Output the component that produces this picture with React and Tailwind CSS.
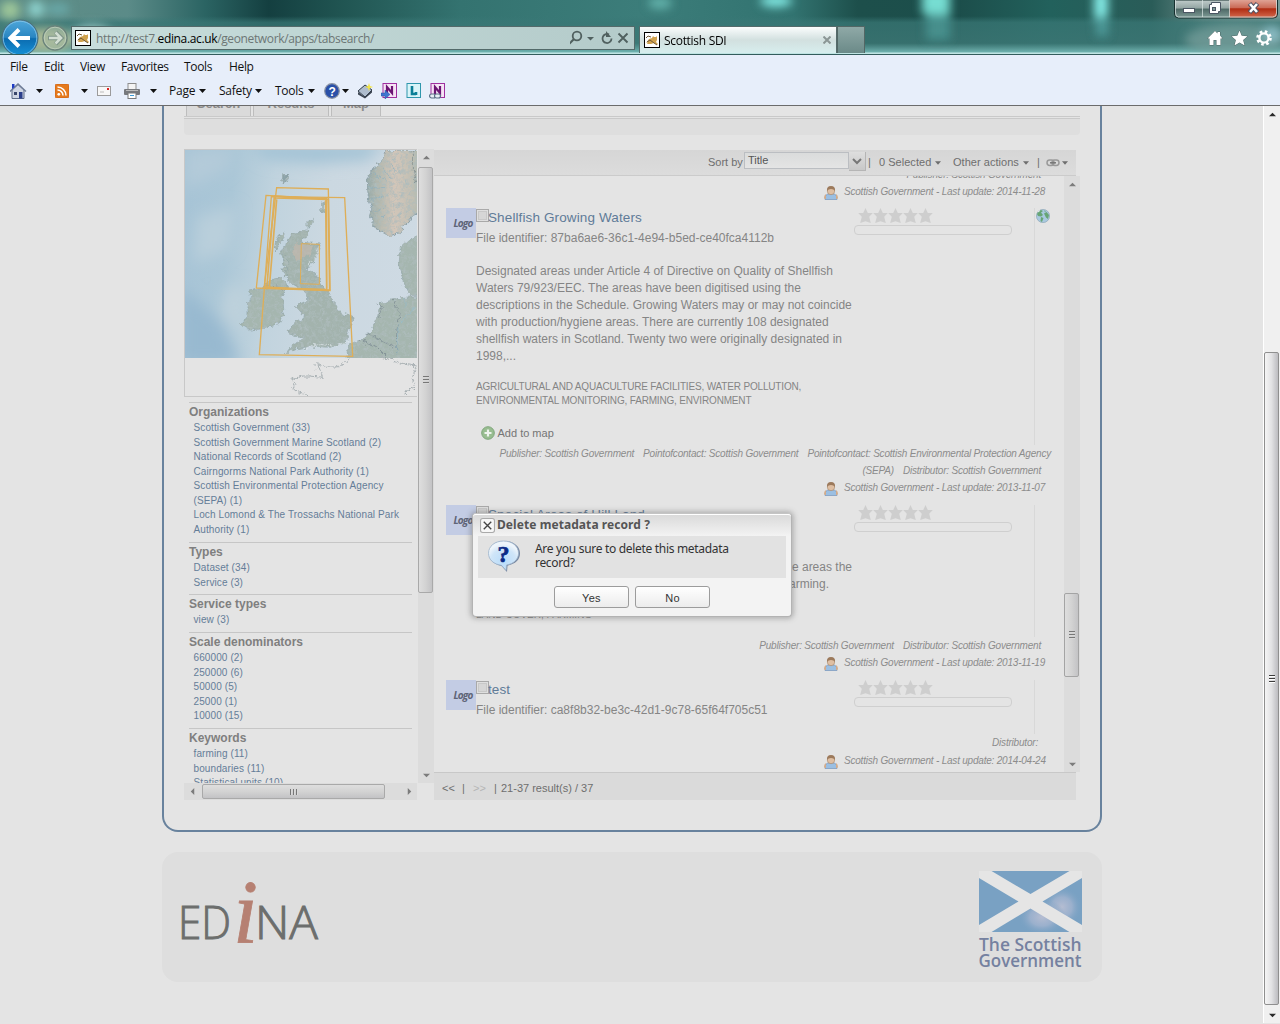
import React from "react";

const MENU_FONT = "font-['Open_Sans','Noto_Sans',sans-serif]";

function Down({ className = "" }) {
  return (
    <svg width="7" height="4" viewBox="0 0 7 4" className={`shrink-0 ${className}`}>
      <path d="M0 0h7L3.5 4z" fill="currentColor" />
    </svg>
  );
}

function Favicon() {
  return (
    <svg width="16" height="16" viewBox="0 0 16 16" className="shrink-0">
      <rect x=".5" y=".5" width="15" height="15" fill="#fff" stroke="#000" />
      <path d="M9 4l1 1h2l1-1v4l-1 2 2 2-1 1-3-2-3 1H3l1-2-2 1 3-4 3-1z" fill="#d0a24e" />
      <path d="M3 10l3-2 4 3 3 2M2 6l2-2 3 1" fill="none" stroke="#6d5836" strokeWidth="1" />
    </svg>
  );
}

function TitleBar() {
  return (
    <div className="relative flex h-[54px] shrink-0 items-start overflow-hidden bg-[#2d6765]">
      <svg width="1280" height="54" className="absolute inset-0" preserveAspectRatio="none">
        <defs>
          <linearGradient id="sky" x1="0" x2="1" y1="0" y2="0">
            <stop offset="0" stopColor="#5f8e86" />
            <stop offset=".1" stopColor="#5b8b88" />
            <stop offset=".16" stopColor="#2b6463" />
            <stop offset=".21" stopColor="#143f40" />
            <stop offset=".27" stopColor="#215653" />
            <stop offset=".36" stopColor="#347370" />
            <stop offset=".5" stopColor="#3c7d7a" />
            <stop offset=".62" stopColor="#327370" />
            <stop offset=".67" stopColor="#1d4f4b" />
            <stop offset=".75" stopColor="#1c4e4b" />
            <stop offset=".82" stopColor="#22615c" />
            <stop offset=".9" stopColor="#2a5c58" />
            <stop offset=".94" stopColor="#648783" />
            <stop offset="1" stopColor="#789b98" />
          </linearGradient>
          <linearGradient id="haze" x1="0" x2="0" y1="0" y2="1">
            <stop offset=".3" stopColor="#3a7977" stopOpacity="0" />
            <stop offset=".42" stopColor="#397775" stopOpacity=".75" />
            <stop offset=".8" stopColor="#3d7876" stopOpacity=".8" />
            <stop offset="1" stopColor="#7ec3c0" />
          </linearGradient>
          <filter id="soft" x="-50%" y="-100%" width="200%" height="300%"><feGaussianBlur stdDeviation="5" /></filter>
        </defs>
        <rect width="1280" height="54" fill="url(#sky)" />
        <rect width="1280" height="54" fill="url(#haze)" />
        <g filter="url(#soft)">
          <ellipse cx="10" cy="10" rx="10" ry="9" fill="#9fc79a" />
          <ellipse cx="36" cy="9" rx="8" ry="8" fill="#8ed3cf" />
          <ellipse cx="58" cy="9" rx="12" ry="6" fill="#69a8a8" />
          <ellipse cx="45" cy="40" rx="30" ry="12" fill="#a7b894" />
          <ellipse cx="92" cy="36" rx="20" ry="12" fill="#8ebcb9" />
          <ellipse cx="660" cy="3" rx="12" ry="6" fill="#63b3ac" />
          <ellipse cx="776" cy="1" rx="16" ry="6" fill="#82eae4" />
          <rect x="922" y="-10" width="28" height="24" fill="#76ddd2" />
          <rect x="926" y="14" width="24" height="26" fill="#478f8c" />
          <rect x="1094" y="-8" width="14" height="28" fill="#84ebe6" />
          <rect x="1096" y="16" width="12" height="20" fill="#4d9a99" />
          <ellipse cx="1235" cy="40" rx="50" ry="16" fill="#79a09d" opacity=".7" />
          <ellipse cx="1272" cy="34" rx="10" ry="8" fill="#8bbcc4" />
        </g>
        <rect y="52.500" width="1280" height="1.500" fill="#bfe4e3" />
      </svg>

      <svg width="71" height="54" className="relative shrink-0">
        <defs>
          <linearGradient id="back" x1="0" x2="0" y1="0" y2="1">
            <stop offset="0" stopColor="#4fa7da" /><stop offset=".48" stopColor="#2a86c2" />
            <stop offset=".52" stopColor="#0b6cb0" /><stop offset="1" stopColor="#1692d8" />
          </linearGradient>
        </defs>
        <circle cx="20" cy="38" r="18" fill="url(#back)" stroke="#4f6b75" />
        <circle cx="20" cy="38" r="16.800" fill="none" stroke="#8cc8e8" strokeWidth=".8" />
        <path d="M10 38h20M19 29.500L10.500 38l8.500 8.500" fill="none" stroke="#fff" strokeWidth="4" />
        <circle cx="55" cy="38" r="12" fill="#a7bba4" fillOpacity=".55" stroke="#6a837b" strokeWidth="1.400" />
        <circle cx="55" cy="38" r="10.800" fill="none" stroke="#c3d1bd" strokeWidth=".8" />
        <path d="M48 38h12M55.500 32l6 6-6 6" fill="none" stroke="#7f9689" strokeWidth="4.400" />
        <path d="M49 38h11M55.500 32.500l5.500 5.500-5.500 5.500" fill="none" stroke="#d2ded2" strokeWidth="2.600" />
      </svg>

      <div className={`relative mt-[26px] flex h-6 w-[564px] shrink-0 items-center border border-[#536a6a] bg-gradient-to-r from-[#c8dedc] to-[#b4cbca] pl-[3px] text-[12px] text-[#6d7675] ${MENU_FONT}`}>
        <Favicon />
        <div className="ml-[5px] mt-px w-[474px] whitespace-pre tracking-[-0.36px]">http://test7.<span className="text-black">edina.ac.uk</span>/geonetwork/apps/tabsearch/</div>
        <svg width="64" height="16" viewBox="2 0 64 16" className="shrink-0" fill="none" stroke="#50605f">
          <circle cx="9" cy="6" r="4.300" strokeWidth="1.800" /><path d="M6 9l-5 5" strokeWidth="2.200" />
          <path d="M19 7h7l-3.500 3.500z" fill="#50605f" stroke="none" />
          <path d="M41 4.500a4.500 4.500 0 1 0 2.500 4" strokeWidth="1.800" /><path d="M38 1v6h5z" fill="#50605f" stroke="none" />
          <path d="M50.500 3.500l9 9M59.500 3.500l-9 9" strokeWidth="1.900" />
        </svg>
      </div>

      <div className={`relative ml-[4px] mt-[26px] flex h-[27px] w-[198px] shrink-0 items-center border border-b-0 border-[#556b6b] bg-gradient-to-b from-[#fbfdfd] via-[#d2e0df] to-[#d7eeee] pl-1 text-[12px] text-black ${MENU_FONT}`}>
        <Favicon />
        <span className="ml-1 mt-px w-[159px] tracking-[-0.3px]">Scottish SDI</span>
        <svg width="8" height="8" viewBox="0 0 8 8"><path d="M.5.5l7 7M7.500.5l-7 7" stroke="#8b9695" strokeWidth="2" /></svg>
      </div>
      <div className="relative mt-[26px] h-[27px] w-[28px] shrink-0 border border-b-0 border-[#526765] bg-gradient-to-b from-[#8fa9a7] to-[#6b8a88]" />

      <svg width="106" height="54" className="relative ml-auto mr-0 shrink-0" viewBox="1174 0 106 54">
        <defs>
          <linearGradient id="ctl" x1="0" x2="0" y1="0" y2="1"><stop offset="0" stopColor="#c1cccb" /><stop offset=".45" stopColor="#93a5a3" /><stop offset=".5" stopColor="#4e6966" /><stop offset="1" stopColor="#809c98" /></linearGradient>
          <linearGradient id="cls" x1="0" x2="0" y1="0" y2="1"><stop offset="0" stopColor="#dfa294" /><stop offset=".45" stopColor="#ca6955" /><stop offset=".5" stopColor="#b02c12" /><stop offset="1" stopColor="#d3684c" /></linearGradient>
        </defs>
        <path d="M1174.500 0v14q0 4 4 4h95q4 0 4-4V0z" fill="url(#ctl)" stroke="#17302f" />
        <path d="M1229.500 0v17.500h44q3.500 0 3.500-4V0z" fill="url(#cls)" />
        <path d="M1175.500 0v13q0 4 3 4h94q4 0 4-4V0M1202.500 0v17M1229.500 0v17" fill="none" stroke="#d7e3e1" strokeOpacity=".75" />
        <rect x="1183.500" y="8.500" width="11" height="4" fill="#fff" stroke="#4b5663" />
        <path d="M1211.500 2.500h9v9h-2v2h-9v-9h2z" fill="#fff" stroke="#4b5663" /><rect x="1212.500" y="7.500" width="3" height="3" fill="#809c98" stroke="#4b5663" />
        <path d="M1249.500 3.500l8 9M1257.500 3.500l-8 9" stroke="#4f5263" strokeWidth="4.600" /><path d="M1250 4l7 8M1257 4l-7 8" stroke="#fff" strokeWidth="2.600" />
        <g fill="#fff" stroke="#4c6664" strokeWidth="1" paintOrder="stroke">
          <path d="M1215 31l2.500 2.500V32h2.500v3.500l2.500 3h-2V45h-4v-5h-3v5h-4v-6.500h-2z" />
          <path d="M1239.500 30.500l2.200 5.300 5.800.5-4.400 3.700 1.500 5.500-5.100-3-5 3 1.400-5.500-4.400-3.700 5.800-.5z" />
        </g>
        <circle cx="1264" cy="38" r="6.300" fill="none" stroke="#fff" strokeWidth="3" strokeDasharray="2.500 2.450" />
        <circle cx="1264" cy="38" r="4.600" fill="none" stroke="#fff" strokeWidth="2.400" />
      </svg>
    </div>
  );
}

function NoteIcon({ kind }) {
  const l = kind === "l";
  return (
    <svg width="17" height="16" viewBox="0 0 17 16" className="shrink-0">
      <rect x="2" y=".5" width="13.500" height="14" fill={l ? "#d9f4f8" : "#f6e3f5"} stroke={l ? "#2f96ac" : "#a02fa0"} />
      {l ? <path d="M7 3v8h4M11 9v3" fill="none" stroke="#0c7f97" strokeWidth="2.600" /> : <path d="M6 11V4l5 6V3" fill="none" stroke="#6b1473" strokeWidth="2.200" />}
      {kind === "arrow" && <path d="M0 10h4V7l5 4.500L4 16v-3H0z" fill="#3f76cf" stroke="#27509d" strokeWidth=".5" />}
      {kind === "link" && <g fill="#e8eef5" stroke="#5a6e86" strokeWidth="1.200"><rect x=".6" y="11" width="6" height="4" rx="2" /><rect x="5.500" y="11" width="6" height="4" rx="2" /></g>}
    </svg>
  );
}

function MenuBars() {
  return (
    <div className={`flex h-[52px] shrink-0 flex-col border-b border-t border-b-[#6b6b6b] border-t-[#335c5c] bg-[#e7eefa] text-[12px] leading-[22px] text-[#111] ${MENU_FONT}`}>
      <div className="flex h-[24px] whitespace-nowrap pl-[10px] pt-px tracking-[-0.34px]">
        <span className="w-[34px]">File</span>
        <span className="w-[36px]">Edit</span>
        <span className="w-[41px]">View</span>
        <span className="w-[63px]">Favorites</span>
        <span className="w-[45px]">Tools</span>
        <span>Help</span>
      </div>
      <div className="flex h-[24px] items-center whitespace-nowrap pl-[10px] tracking-[-0.25px]">
        <svg width="17" height="16" viewBox="0 0 17 16" className="shrink-0">
          <path d="M2 7v8.500h12V7L8 1.500z" fill="#cfd6e4" stroke="#5d6b86" /><path d="M0 8.500L8 1l8 7.500" fill="none" stroke="#6f7d97" strokeWidth="1.500" />
          <path d="M2 1h2.500v3L2 6z" fill="#1f3cc4" /><rect x="9" y="9" width="3.500" height="6.500" fill="#2b3f8b" /><rect x="4" y="9" width="3" height="3" fill="#39466b" />
        </svg>
        <Down className="ml-[9px]" />
        <svg width="14" height="14" viewBox="0 0 14 14" className="ml-[12px] shrink-0">
          <rect width="14" height="14" rx="2" fill="#e57a1d" stroke="#c2560c" strokeWidth=".6" /><circle cx="3.800" cy="10.300" r="1.400" fill="#fff" />
          <path d="M2.500 6a5.500 5.500 0 0 1 5.500 5.500M2.500 3a8.500 8.500 0 0 1 8.500 8.500" fill="none" stroke="#fff" strokeWidth="1.500" />
        </svg>
        <Down className="ml-[12px]" />
        <svg width="14" height="10" viewBox="0 0 14 10" className="ml-[9px] shrink-0"><rect x=".5" y=".5" width="13" height="9" fill="#f7f7f7" stroke="#9b9b9b" /><rect x="10" y="2" width="2" height="2" fill="#e02020" /><path d="M3 6h4" stroke="#bbb" /></svg>
        <svg width="16" height="16" viewBox="0 0 16 16" className="ml-[13px] shrink-0">
          <rect x="4" y=".5" width="8" height="6" fill="#f4f4f4" stroke="#8d8d8d" /><rect x="0" y="6" width="16" height="6" rx="1" fill="#77797d" /><path d="M2 7.500h12" stroke="#bbb" />
          <rect x="4" y="10" width="8" height="5.500" fill="#fff" stroke="#7a7a7a" /><path d="M6 12.500h4" stroke="#3b9bd8" />
        </svg>
        <Down className="ml-[10px]" />
        <span className="ml-[12px] w-[30px]">Page</span><Down />
        <span className="ml-[13px] w-[36px]">Safety</span><Down />
        <span className="ml-[13px] w-[33px]">Tools</span><Down />
        <svg width="16" height="16" viewBox="0 0 16 16" className="ml-[9px] shrink-0">
          <circle cx="8" cy="8" r="7.300" fill="#2a50a8" stroke="#8b93a3" strokeWidth="1.200" />
          <text x="8" y="12.500" textAnchor="middle" fill="#fff" className="font-['Liberation_Sans',sans-serif] text-[12px] font-bold">?</text>
        </svg>
        <Down className="ml-[2px]" />
        <svg width="17" height="16" viewBox="0 0 17 16" className="ml-[8px] shrink-0">
          <path d="M1 8l7-6 7 5-7 7z" fill="#aebccd" stroke="#2f3a48" /><path d="M1 9v2.500l7 4 7-6V7l-7 7z" fill="#3a4350" /><path d="M12 0l1 3 3 1-3 1-1 3-1-3-3-1 3-1z" fill="#f3e545" />
        </svg>
        <div className="ml-[7px] flex gap-[7px]"><NoteIcon kind="arrow" /><NoteIcon kind="l" /><NoteIcon kind="link" /></div>
      </div>
    </div>
  );
}

function Arrow({ dir, dark }) {
  const d = { up: "M0 6L4 2l4 4z", down: "M0 2l4 4 4-4z", left: "M6 0L2 4l4 4z", right: "M2 0l4 4-4 4z" }[dir];
  return (
    <div className="flex h-4 w-4 shrink-0 items-center justify-center">
      <svg width="7" height="7" viewBox="0 0 8 8"><path d={d} fill={dark ? "#2a2a2a" : "#7c7c7c"} /></svg>
    </div>
  );
}

function VGrip({ dark }) {
  return (
    <div className="flex flex-col gap-px">
      {[0, 1, 2].map((i) => <div key={i} className={`h-[2px] w-[6px] border-t ${dark ? "border-[#3c3c3c] bg-white" : "border-[#777] bg-[#d8d8d8]"}`} />)}
    </div>
  );
}

function LeftMap() {
  return (
    <div className="h-[248px] w-[233px] border border-r-0 border-[#c8c8c8]">
      <svg width="232" height="246" viewBox="75 150 696 738" preserveAspectRatio="none" className="block">
        <defs>
          <linearGradient id="sea" x1="0" x2="1" y1=".4" y2=".5">
            <stop offset="0" stopColor="#a7c4d6" /><stop offset=".18" stopColor="#abc7d7" /><stop offset=".36" stopColor="#c0d3de" /><stop offset=".6" stopColor="#cbd8e1" /><stop offset="1" stopColor="#cedae3" />
          </linearGradient>
          <linearGradient id="norway" x1="0" x2="1" y1="0" y2="0"><stop offset="0" stopColor="#93a8a8" /><stop offset=".22" stopColor="#b3b8ae" /><stop offset=".5" stopColor="#d3c6b9" /><stop offset=".8" stopColor="#c3c0b4" /><stop offset="1" stopColor="#abb8af" /></linearGradient>
          <filter id="rough" x="-5%" y="-5%" width="110%" height="110%"><feTurbulence type="fractalNoise" baseFrequency=".07" numOctaves="3" seed="4" /><feDisplacementMap in="SourceGraphic" scale="20" xChannelSelector="R" yChannelSelector="G" /></filter>
          <filter id="grain" x="0" y="0" width="1" height="1"><feTurbulence type="fractalNoise" baseFrequency=".09" numOctaves="3" seed="9" result="n" /><feColorMatrix in="n" values="0 0 0 0 .42  0 0 0 0 .5  0 0 0 0 .5  2.600 0 0 0 -1.100" result="c" /><feComposite in="c" in2="SourceGraphic" operator="in" result="g" /><feMerge><feMergeNode in="SourceGraphic" /><feMergeNode in="g" /></feMerge></filter>
          <filter id="mist" x="-50%" y="-50%" width="200%" height="200%"><feGaussianBlur stdDeviation="22" /></filter>
          <clipPath id="tile"><rect x="75" y="150" width="696" height="624" /></clipPath>
        </defs>
        <g clipPath="url(#tile)">
          <rect x="75" y="150" width="696" height="624" fill="url(#sea)" />
          <g filter="url(#mist)">
            <path d="M260 130h420l-60 50-150 10-150-10z" fill="#a2c2d5" />
            <path d="M75 150h150l-30 60-120 60z" fill="#b4cbd9" />
            <path d="M110 350l120-30-20 130-110 40z" fill="#b9cfdb" />
            <path d="M60 560l120 100 60 130H60z" fill="#98b9d0" />
            <path d="M200 560l60 0 0 150-80-60z" fill="#bed1dc" />
          </g>
          <g filter="url(#rough)">
            <g filter="url(#grain)">
              <path d="M680 150l-14 36-32 22-16 40 4 40 14 36-8 26 20 36 40 22 30-10 40-50 30-20V150z" fill="url(#norway)" stroke="#8a9fa8" strokeWidth="3" />
            </g>
            <path d="M640 220l40 20M622 260l50 6M630 300l40-10M640 340l34-20M650 370l26-26M690 190l20 30M666 200l30 40" stroke="#8fb0bf" strokeWidth="3" fill="none" opacity=".7" />
            <g filter="url(#grain)" fill="#a5b6af" stroke="#8fa3a6" strokeWidth="2">
              <path d="M790 400l-45 22-24 22-4 50 16 60 20 32 36 0z" />
              <path d="M790 590l-60 2-40 10-30 10-8 40-24 50-30 20-36 15 4 28-20 20h244z" />
              <path d="M398 400l44-8 4 12-28 22 62 6-8 32-20 36-20 6 30 12 18 24 16 30 22 24 22 42 40 16-12 36-14 40-46 12-50-4-48 8-34 16 22-28 36-18-50-20 22-28 32-16-32-34 22-10 16-6-10-34-22-8-28-16-6-44-16-40 12-22z" fill="#a3b3ad" />
              <path d="M330 540l34-8 20 26-16 34 4 50-16 28-46 16-40 4-28-16 22-26 0-30 12-28-12-20 40-6z" />
              <path d="M366 222l20 0 0 16-12 14-12-12z" fill="#8ca3a8" />
              <path d="M444 366l16-8-6 16-10 14zM484 310l10-10 0 28-8 8zM354 412l18-14 4 8-24 34-8 12 2-22zM366 470l14-6 6 20-10 16zM366 508l12-6 4 22-8 4z" />
            </g>
            <path d="M410 430l50 6-14 30-34 16-16-24z" fill="#c2b8ac" opacity=".7" />
            <path d="M430 748l50-18 50 8 40-16M444 495l24-22 8-34" fill="none" stroke="#e2eaee" strokeWidth="2.500" opacity=".8" />
            <path d="M650 608l14 18-8 24M700 600l20 40-10 60 0 60M600 720l50 20 30 30M620 700l80 40" fill="none" stroke="#86959a" strokeWidth="3" />
            <path d="M710 760l4-80 50-60M735 592l0 30" fill="none" stroke="#94bccb" strokeWidth="2" />
            <path d="M320 558l34 4 14 12M760 150v60l10 40" fill="none" stroke="#7f8e90" strokeWidth="2.500" />
          </g>
        </g>
        <g filter="url(#rough)" fill="none" stroke="#a9b1b4" strokeWidth="3">
          <path d="M660 770l30 8 44 14 34 6M575 772l-38 28-40 2-24-14 14 44-40-4-20 0-34 10 12 16-10 8 20 16 24 6 20 14M768 798l-12 40 10 20M768 862l-24 8-6 18M460 798h8M470 808h4" />
        </g>
        <g fill="none" stroke="#deae58" strokeWidth="4">
          <path d="M350 263l155 4 5 305-198-7z" />
          <path d="M318 286l182 10 0 272-211-4z" />
          <path d="M334 290l220 3 24 476-280-5z" />
          <path d="M341 288l160 10M343 288l-23 280M350 298l-22 264M345 294l160 4M497 296l3 270M505 296l4 276" strokeWidth="5" />
          <path d="M312 562l196 9" strokeWidth="6" />
          <path d="M424 431l54 2 0 120-57-2z" strokeWidth="3" />
        </g>
      </svg>
    </div>
  );
}

const FACETS = [
  ["Organizations", "h-[140px]", ["Scottish Government (33)", "Scottish Government Marine Scotland (2)", "National Records of Scotland (2)", "Cairngorms National Park Authority (1)", "Scottish Environmental Protection Agency", "(SEPA) (1)", "Loch Lomond & The Trossachs National Park", "Authority (1)"]],
  ["Types", "h-[52px]", ["Dataset (34)", "Service (3)"]],
  ["Service types", "h-[38px]", ["view (3)"]],
  ["Scale denominators", "h-[96px]", ["660000 (2)", "250000 (6)", "50000 (5)", "25000 (1)", "10000 (15)"]],
  ["Keywords", "h-[70px]", ["farming (11)", "boundaries (11)", "Statistical units (10)"]],
];

function Sidebar() {
  return (
    <div className="flex h-[651px] w-[250px] shrink-0 flex-col">
      <div className="flex h-[634px]">
        <div className="h-[634px] w-[234px] overflow-hidden">
          <LeftMap />
          <div className="ml-[5px] mt-[5px] w-[223px]">
            {FACETS.map(([name, h, items]) => (
              <div key={name} className={`border-t border-[#c6c6c6] ${h}`}>
                <div className="h-[18px] text-[12px] font-bold leading-[18px] text-[#7f7f7f]">{name}</div>
                {items.map((t) => <div key={t} className="ml-[4.500px] whitespace-nowrap text-[10px] leading-[14.500px] tracking-[0.110px] text-[#647d98]">{t}</div>)}
              </div>
            ))}
          </div>
        </div>
        <div className="flex h-[634px] w-4 flex-col bg-[#dcdcdc]">
          <Arrow dir="up" />
          <div className="mt-[2px] flex h-[426px] w-[15px] items-center justify-center rounded-[2px] border border-[#a9a9a9] bg-gradient-to-r from-[#dedede] via-[#d3d3d3] to-[#c3c3c5]"><VGrip /></div>
          <div className="mt-auto"><Arrow dir="down" /></div>
        </div>
      </div>
      <div className="flex h-[17px] w-[233px] items-center bg-[#dcdcdc]">
        <Arrow dir="left" />
        <div className="ml-[2px] flex h-[15px] w-[183px] items-center justify-center gap-px rounded-[2px] border border-[#a9a9a9] bg-gradient-to-b from-[#dedede] via-[#d3d3d3] to-[#c3c3c5]">
          {[0, 1, 2].map((i) => <div key={i} className="h-[6px] w-[2px] border-l border-[#777] bg-[#d8d8d8]" />)}
        </div>
        <div className="ml-auto"><Arrow dir="right" /></div>
      </div>
    </div>
  );
}

function Toolbar() {
  return (
    <div className="flex h-[26px] w-[642px] items-center border-b border-[#cbcbcb] bg-gradient-to-b from-[#d6d6d6] to-[#dcdcdc] pl-[274px] text-[11px] text-[#6e6e6e]">
      <span className="w-[36px] shrink-0">Sort by</span>
      <div className="-mt-[4px] h-[17px] w-[105px] shrink-0 border border-[#bbbec2] bg-gradient-to-b from-[#dadcdc] to-[#e4e4e4] pl-[3px] text-[11px] leading-[15px] text-[#555]">Title</div>
      <div className="-mt-[2px] flex h-[19px] w-[17px] shrink-0 items-center justify-center border border-l-0 border-t-0 border-[#b5b5b5] bg-gradient-to-b from-[#dedede] to-[#c8c8c8]">
        <svg width="10" height="7" viewBox="0 0 10 7"><path d="M1 1l4 4 4-4" fill="none" stroke="#777" strokeWidth="2" /></svg>
      </div>
      <span className="ml-[2px] w-[11px] shrink-0">|</span>
      <span className="w-[56px] shrink-0 whitespace-nowrap tracking-[0.03px]">0 Selected</span>
      <Down className="!w-[6px]" />
      <span className="ml-[12px] w-[70px] shrink-0 whitespace-nowrap tracking-[0.03px]">Other actions</span>
      <Down className="!w-[6px]" />
      <span className="ml-[8px] w-[9px] shrink-0">|</span>
      <svg width="14" height="8" viewBox="0 0 14 8" className="shrink-0" fill="none" stroke="#999" strokeWidth="1.500"><rect x="1" y="1" width="7" height="5.500" rx="2.700" /><rect x="6" y="1" width="7" height="5.500" rx="2.700" /><path d="M4 3.800h6" stroke="#777" /></svg>
      <Down className="ml-[2px] !w-[6px]" />
    </div>
  );
}

function Update({ date }) {
  return (
    <div className="flex h-[17px] items-start whitespace-nowrap pl-[390px] text-[10px] italic leading-[17px] tracking-[-0.210px] text-[#8c8c8c]">
      <svg width="14" height="14" viewBox="0 0 14 14" className="mt-[3px] shrink-0">
        <path d="M1 13q0-5 4-5h4q4 0 4 5v.5H1z" fill="#9bbfe2" stroke="#7f9cc0" strokeWidth=".8" />
        <path d="M0 12q0-3 2-4v5H1zM14 12q0-3-2-4v5h1z" fill="#d3ab8a" /><circle cx="7" cy="5" r="3.700" fill="#dfbfa3" stroke="#a28468" strokeWidth=".6" /><path d="M3 5q-.5-5 4-5t4 5q-1-2-4-2T3 5z" fill="#9c7a5c" />
      </svg>
      <span className="ml-[6px]">Scottish Government - Last update: {date}</span>
    </div>
  );
}

function Rating() {
  return (
    <div className="w-[158px] shrink-0">
      <div className="ml-[3.500px] flex h-[17px] items-start">
        {[0, 1, 2, 3, 4].map((i) => (
          <svg key={i} width="15" height="16" viewBox="0 0 15 16"><path d="M7.500 0l2.300 5h5l-3.600 3.800 1.600 6.200-5.300-1.800L2.200 15l1.600-6.200L.2 5h5z" fill="#cecece" /></svg>
        ))}
      </div>
      <div className="h-[10px] rounded-[4px] border border-[#cfcfcf]" />
    </div>
  );
}

function Record({ title, h, globe, children }) {
  return (
    <div className={`flex pl-[12px] ${h}`}>
      <div className="flex h-[30px] w-[30px] shrink-0 items-center justify-end bg-[#c3cce4] pr-[3.500px] text-[#5e6477]">
        <span className="font-['Open_Sans',sans-serif] text-[10px] font-bold italic tracking-[-0.8px]">Logo</span>
      </div>
      <div className="h-full w-[378px] shrink-0 text-[12px] leading-[17px] text-[#858585]">
        <div className="flex h-[20px] items-start">
          <div className="mt-px h-[13px] w-[13px] shrink-0 border border-[#a9a9a9] bg-[#dfdfdf] p-px"><div className="h-full w-full border border-[#c8c8c8] bg-[#d6d6d6]" /></div>
          <span className="-ml-px whitespace-nowrap text-[13.500px] leading-[19px] tracking-[0.120px] text-[#5f7b98]">{title}</span>
        </div>
        {children}
      </div>
      <Rating />
      <div className="ml-[22px] h-full w-px bg-[#d8d8d8]" />
      {globe && (
        <svg width="14" height="14" viewBox="0 0 14 14" className="ml-[1px] mt-[1px]">
          <circle cx="7" cy="7" r="6.600" fill="#a9c9e0" stroke="#8fa8b8" strokeWidth=".7" />
          <path d="M1 5q1-3 4-4l2 1-2 1.500L7 6 5 7.500 2 7zM5 8l2.500 1-1.500 4-1.500-1zM8 4.500l2.500-1.500 2.500 3-1 4-2-1.500zM8 1.500l2 .5-1 1z" fill="#67a575" /><path d="M2 3l2-1.500" stroke="#e8f0f2" />
        </svg>
      )}
    </div>
  );
}

function Contacts({ items, pad }) {
  return (
    <div className={`flex justify-end gap-[9px] whitespace-nowrap text-[10px] italic leading-[17px] tracking-[-0.2px] text-[#8c8c8c] ${pad}`}>
      {items.map((t, i) => <span key={i}>{t}</span>)}
    </div>
  );
}

function Results() {
  return (
    <div className="flex h-[596px] w-[646px] overflow-hidden">
      <div className="-mt-[10px] w-[630px] shrink-0">
        <Contacts pad="pr-[23px]" items={["Publisher: Scottish Government"]} />
        <Update date="2014-11-28" />
        <div className="h-[8px]" />
        <Record title="Shellfish Growing Waters" h="h-[237px]" globe>
          <div className="h-[35px] whitespace-nowrap leading-[21px]">File identifier: 87ba6ae6-36c1-4e94-b5ed-ce40fca4112b</div>
          <div className="whitespace-pre">{"Designated areas under Article 4 of Directive on Quality of Shellfish\nWaters 79/923/EEC. The areas have been digitised using the\ndescriptions in the Schedule. Growing Waters may or may not coincide\nwith production/hygiene areas. There are currently 108 designated\nshellfish waters in Scotland. Twenty two were originally designated in\n1998,..."}</div>
          <div className="mt-[15px] whitespace-pre text-[10px] leading-[14px] tracking-[-0.170px]">{"AGRICULTURAL AND AQUACULTURE FACILITIES, WATER POLLUTION,\nENVIRONMENTAL MONITORING, FARMING, ENVIRONMENT"}</div>
          <div className="mt-[16px] flex items-center pl-[5px] text-[11px] leading-[17px] text-[#757575]">
            <svg width="14" height="14" viewBox="0 0 14 14" className="-mt-px"><circle cx="7" cy="7" r="6.300" fill="#98bd90" stroke="#7fa67c" /><path d="M7 3.500v7M3.500 7h7" stroke="#eef3ee" strokeWidth="2.200" /></svg>
            <span className="ml-[2.500px] mt-px">Add to map</span>
          </div>
        </Record>
        <Contacts pad="pr-[13px]" items={["Publisher: Scottish Government", "Pointofcontact: Scottish Government", "Pointofcontact: Scottish Environmental Protection Agency"]} />
        <Contacts pad="pr-[23px]" items={["(SEPA)", "Distributor: Scottish Government"]} />
        <Update date="2013-11-07" />
        <div className="h-[9px]" />
        <Record title="Special Areas of Hill Land" h="h-[132px]">
          <div className="h-[34px]" />
          <div className="w-[376px] text-right">the areas the</div>
          <div className="w-[353px] text-right">farming.</div>
          <div className="mt-[15px] text-[10px] leading-[14px]">LAND COVER, FARMING</div>
        </Record>
        <Contacts pad="pr-[23px]" items={["Publisher: Scottish Government", "Distributor: Scottish Government"]} />
        <Update date="2013-11-19" />
        <div className="h-[9px]" />
        <Record title="test" h="h-[54px]">
          <div className="whitespace-nowrap leading-[21px]">File identifier: ca8f8b32-be3c-42d1-9c78-65f64f705c51</div>
        </Record>
        <Contacts pad="pr-[26px]" items={["Distributor:"]} />
        <div className="h-px" />
        <Update date="2014-04-24" />
      </div>
      <div className="flex h-[596px] w-4 shrink-0 flex-col bg-[#dcdcdc]">
        <Arrow dir="up" />
        <div className="mt-[401px] flex h-[84px] w-[15px] items-center justify-center rounded-[2px] border border-[#a4a4a4] bg-gradient-to-r from-[#dedede] via-[#d3d3d3] to-[#c3c3c5]"><VGrip /></div>
        <div className="mt-auto"><Arrow dir="down" /></div>
      </div>
    </div>
  );
}

function Dialog() {
  return (
    <div className="absolute left-[472px] top-[513px] flex h-[104px] w-[320px] flex-col rounded-[4px] border border-[#b3b3b3] border-t-[#c4c4c4] bg-[#f3f3f3] px-[5px] font-['Noto_Sans',sans-serif] shadow-[0_0_5px_2px_rgba(90,90,90,0.35)]">
      <div className="-mx-[5px] flex h-[22px] shrink-0 items-center rounded-t-[3px] border-t border-white bg-gradient-to-b from-[#dadada] to-[#f3f3f3] pl-[7px]">
        <svg width="15" height="15" viewBox="0 0 14 14" className="shrink-0"><rect x=".5" y=".5" width="13" height="13" rx="2" fill="#f7f7f7" stroke="#aaa" /><path d="M3.500 3.500l7 7M10.500 3.500l-7 7" stroke="#444" strokeWidth="1.300" /></svg>
        <span className="-mt-[2px] ml-[2px] whitespace-nowrap text-[12px] font-bold tracking-[0.070px] text-[#555]">Delete metadata record ?</span>
      </div>
      <div className="flex h-[42px] w-[308px] shrink-0 bg-[#e2e2e2] pl-[9px]">
        <svg width="34" height="34" viewBox="0 0 34 34" className="mt-[4px] shrink-0">
          <defs><radialGradient id="bub" cx=".5" cy=".7" r=".6"><stop offset="0" stopColor="#b9dcfa" /><stop offset=".7" stopColor="#cfe5f8" /><stop offset="1" stopColor="#eef5fb" /></radialGradient></defs>
          <path d="M17 1C8 1 2 6 2 13.500 2 20 7 24.500 14.500 26l5.500 6 .5-6.300C28 24 33 20 33 13.500 33 6 26 1 17 1z" fill="#7787a0" />
          <path d="M16.500 1C8 1 1.500 6 1.500 13.300 1.500 20 7 24.300 14.500 25.300l4.500 5 .5-5.300C27 23.800 31.500 19 31.500 13.300 31.500 6 25 1 16.500 1z" fill="url(#bub)" stroke="#9db4cc" strokeWidth=".8" />
          <text x="16.500" y="21.500" textAnchor="middle" fill="#0b2b86" className="font-['Liberation_Serif',serif] text-[24px] font-bold" stroke="#0b2b86" strokeWidth=".7">?</text>
        </svg>
        <div className="ml-[14px] mt-[6px] whitespace-pre text-[12px] leading-[14px] tracking-[-0.310px] text-[#333]">{"Are you sure to delete this metadata\nrecord?"}</div>
      </div>
      <div className="mt-[8px] flex justify-center gap-[6px] font-['Liberation_Sans',sans-serif] text-[11px] text-[#333]">
        <div className="flex h-[22px] w-[75px] items-center justify-center rounded-[3px] border border-[#9c9c9c] bg-gradient-to-b from-white to-[#ececec] pt-[2px] tracking-[0.3px]">Yes</div>
        <div className="flex h-[22px] w-[75px] items-center justify-center rounded-[3px] border border-[#9c9c9c] bg-gradient-to-b from-white to-[#ececec] pt-[2px] tracking-[0.3px]">No</div>
      </div>
    </div>
  );
}

function Footer() {
  return (
    <div className="ml-[162px] mt-[20px] flex h-[130px] w-[940px] shrink-0 items-start justify-between rounded-[16px] bg-[#dedede] pl-[18px] pr-[20px]">
      <svg width="142" height="70" viewBox="180 880 142 70" className="mt-[28px]">
        <text x="178" y="939" textLength="53" lengthAdjust="spacingAndGlyphs" fill="#6c6e6d" stroke="#6c6e6d" strokeWidth="1" className="font-['Open_Sans',sans-serif] text-[46px] font-light">ED</text>
        <text x="233" y="942.500" fill="#b68072" stroke="#b68072" strokeWidth=".8" className="font-['Liberation_Serif',serif] text-[90px] italic">i</text>
        <text x="255" y="939" textLength="63" lengthAdjust="spacingAndGlyphs" fill="#6c6e6d" stroke="#6c6e6d" strokeWidth="1" className="font-['Open_Sans',sans-serif] text-[46px] font-light">NA</text>
      </svg>
      <svg width="104" height="100" viewBox="978 870 104 100" className="mt-[18px]">
        <defs>
          <radialGradient id="cloud"><stop offset="0" stopColor="#b5bdd2" /><stop offset=".5" stopColor="#a3b4cf" stopOpacity=".8" /><stop offset="1" stopColor="#79a1c3" stopOpacity="0" /></radialGradient>
          <clipPath id="flag"><rect x="979" y="871" width="103" height="61" /></clipPath>
        </defs>
        <rect x="979" y="871" width="103" height="61" fill="#79a1c3" />
        <g clipPath="url(#flag)">
          <ellipse cx="1062" cy="907" rx="20" ry="20" fill="url(#cloud)" /><ellipse cx="1042" cy="917" rx="24" ry="18" fill="url(#cloud)" />
          <path d="M979 871h12.500L1030.500 894l39-23H1082v7l-39.500 23.500L1082 925v7h-12.500l-39-23.500-39 23.500H979v-7l39.500-23.500L979 878z" fill="#e5e5e5" />
        </g>
        <text x="979" y="950.500" textLength="102.500" lengthAdjust="spacingAndGlyphs" fill="#7581a0" className="font-['Open_Sans',sans-serif] text-[18.500px] font-semibold">The Scottish</text>
        <text x="978.500" y="966.500" textLength="103" lengthAdjust="spacingAndGlyphs" fill="#7581a0" className="font-['Open_Sans',sans-serif] text-[18.500px] font-semibold">Government</text>
      </svg>
    </div>
  );
}

export default function App() {
  return (
    <div className="relative flex h-[1024px] w-[1280px] flex-col overflow-hidden bg-[#e4e4e4] font-['Liberation_Sans',sans-serif]">
      <TitleBar />
      <MenuBars />
      <div className="flex h-[917px]">
        <div className="flex w-[1263px] shrink-0 flex-col">
          <div className="ml-[162px] flex h-[726px] w-[940px] shrink-0 flex-col rounded-b-[16px] border-2 border-t-0 border-[#68829d] pl-[20px]">
            <div className="flex h-[10px] items-end gap-[2px] overflow-hidden pl-[2px] text-center text-[13px] font-bold leading-[7px] text-[#8c8c8c]">
              <div className="h-[16px] w-[65px] border-x border-[#bdbdbd] bg-[#dadada]">Search</div>
              <div className="h-[16px] w-[76px] border-x border-[#bdbdbd] bg-[#dadada]">Results</div>
              <div className="h-[16px] w-[50px] border-x border-[#bdbdbd] bg-[#dadada]">Map</div>
            </div>
            <div className="h-[3px] w-[896px] border-y border-[#c9c9c9]" />
            <div className="h-[16px] w-[896px] rounded-b-[4px] bg-[#dedede]" />
            <div className="mt-[14px] flex">
              <Sidebar />
              <div className="mt-[1px] flex w-[646px] flex-col">
                <Toolbar />
                <Results />
                <div className="flex h-[28px] w-[642px] items-center whitespace-nowrap border-t border-[#c8c8c8] bg-[#dadada] pl-[8px] pt-[3px] text-[11px] text-[#6e6e6e]">
                  <span className="w-[20px]">&lt;&lt;</span><span className="w-[11px]">|</span><span className="w-[21px] text-[#b5b5b5]">&gt;&gt;</span><span className="w-[7px]">|</span><span>21-37 result(s) / 37</span>
                </div>
              </div>
            </div>
          </div>
          <Footer />
        </div>
        <div className="flex h-[917px] w-[17px] flex-col border-l border-white bg-[#f0f0f0]">
          <Arrow dir="up" dark />
          <div className="mt-[230px] flex h-[653px] w-[15px] items-center justify-center rounded-[2px] border border-[#8f8f8f] bg-gradient-to-r from-[#f5f5f5] via-[#e2e2e4] to-[#bcbcc0]"><VGrip dark /></div>
          <div className="mt-auto"><Arrow dir="down" dark /></div>
        </div>
      </div>
      <Dialog />
    </div>
  );
}
